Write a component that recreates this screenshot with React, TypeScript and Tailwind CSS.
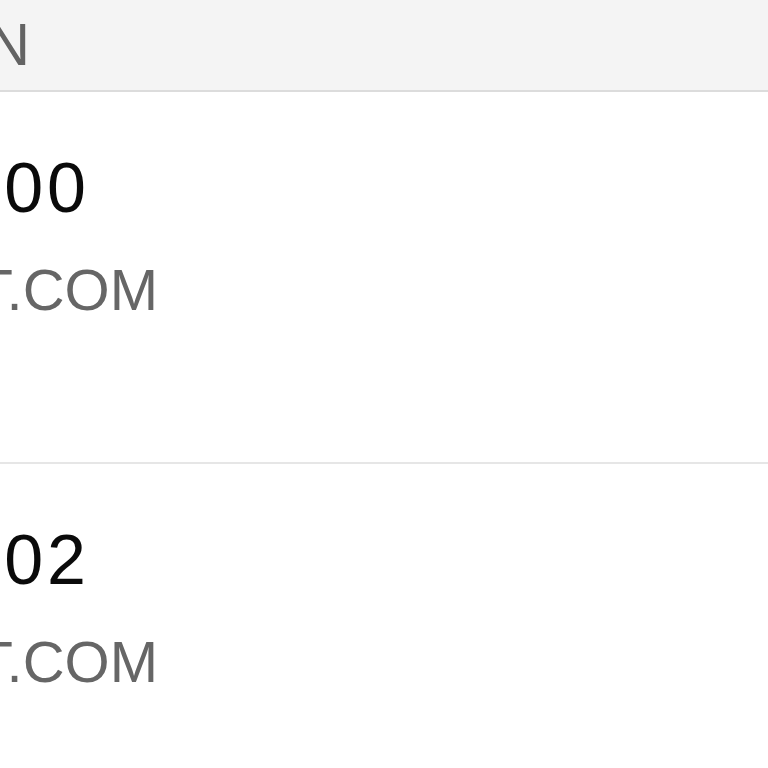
import React from "react";

const rows = [
  { phone: "(555) 555-0100", email: "CONTACT@EXAMPLET.COM" },
  { phone: "(555) 555-0102", email: "SUPPORT@EXAMPLET.COM" },
];

export default function App() {
  return (
    <div
      className="w-[768px] h-[768px] overflow-hidden bg-white"
      style={{ fontFamily: '"Liberation Sans", Arial, sans-serif' }}
    >
      <div className="h-[92px] bg-[#f4f4f4] border-b-2 border-[#dcdcdc] flex">
        <div className="w-[30px] shrink-0 flex justify-end whitespace-nowrap text-[60px] leading-[90px] text-[#636363]">
          <span>LOCATION</span>
        </div>
      </div>
      {rows.map((r, i) => (
        <div
          key={i}
          className="h-[372px] border-b-2 border-[#e6e6e6] pt-[61px] flex flex-col"
        >
          <div className="w-[90px] shrink-0 flex justify-end whitespace-nowrap text-[70px] leading-none tracking-[4px] text-[#0a0a0a]">
            <span>{r.phone}</span>
          </div>
          <div className="mt-[38px] w-[158px] shrink-0 flex justify-end whitespace-nowrap text-[58px] leading-none text-[#666666]">
            <span>{r.email}</span>
          </div>
        </div>
      ))}
    </div>
  );
}
